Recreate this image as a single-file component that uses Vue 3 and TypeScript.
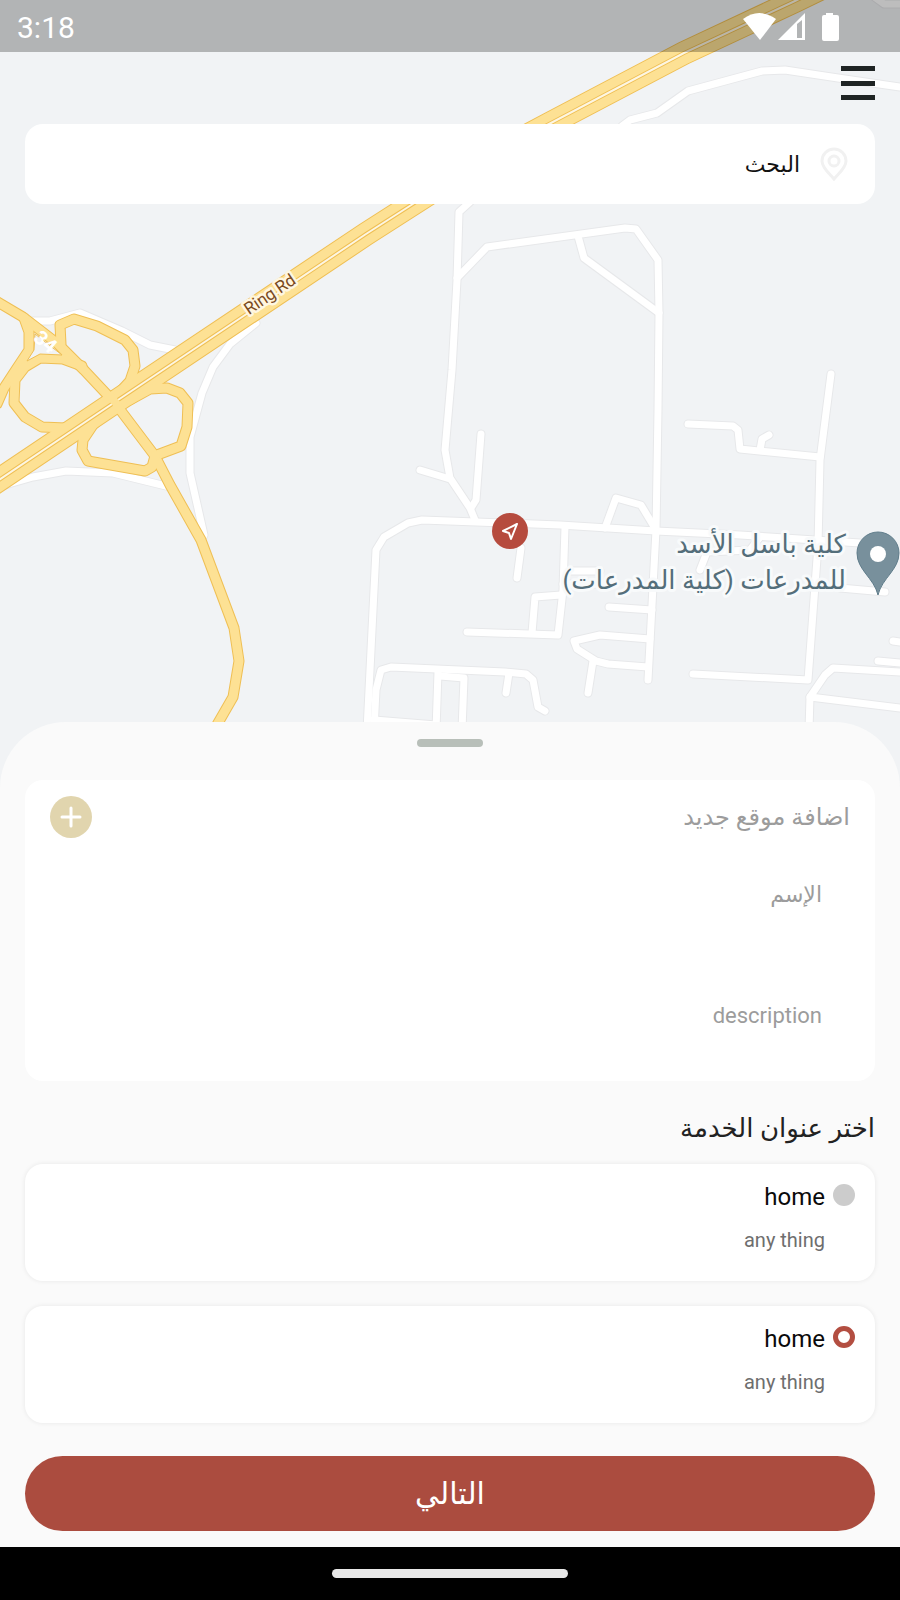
<script setup lang="ts">
import { ref } from 'vue'

interface Address {
  id: number
  title: string
  details: string
}

const addresses: Address[] = [
  { id: 1, title: 'home', details: 'any thing' },
  { id: 2, title: 'home', details: 'any thing' },
]
const selected = ref(2)
const search = ref('')
const placeName = ref('')
const placeDescription = ref('')

const localStreets: string[] = [
  'M622 126 L630 120 L657 113 L688 91 L762 71 L785 70 L838 78 L900 87',
  'M873 -4 L884 4 L900 4',
  'M470 202 L459 212 L457 280 L452 370 L445 450 L450 478 L470 508 L475 520',
  'M457 278 L487 247 L625 228 L636 229 L658 260 L659 313 L658 410 L656 530 L652 605 L648 680',
  'M578 236 L584 258 L659 313',
  'M420 470 L450 479',
  'M481 434 L476 500 L471 508',
  'M367 730 L376 550 L384 537 L408 523 L422 520 L560 525 L656 531 L740 535 L860 543',
  'M521 548 L517 578',
  'M565 527 L563 590 L558 635 L467 632',
  'M561 595 L535 597 L532 633',
  'M564 571 L600 571',
  'M563 584 L600 584',
  'M605 528 L616 498 L641 505 L656 530',
  'M609 607 L652 610',
  'M650 639 L600 635 L574 641 L577 649 L596 661 L608 664 L648 667',
  'M593 661 L588 693',
  'M374 730 L376 690 L381 670 L391 667 L505 672 L526 674 L533 680 L538 707 L545 711',
  'M438 672 L436 730',
  'M440 676 L464 678 L462 730',
  'M509 673 L506 693',
  'M374 720 L436 725',
  'M688 424 L733 426 L738 430 L740 449 L820 457',
  'M760 450 L762 439 L769 435',
  'M831 374 L820 460 L818 545 L808 680 L693 674',
  'M700 570 L707 552 L750 550 L760 537',
  'M840 588 L885 592',
  'M893 641 L900 642',
  'M878 661 L900 663',
  'M809 730 L810 697 L825 675 L833 668 L900 672',
  'M810 697 L900 708',
]

const slipRoads: string[] = [
  'M33 321 L50 321 L80 313 L122 331 L150 345 L175 350',
  'M5 485 L33 477 L66 471 L113 473 L170 487',
  'M256 323 L230 344 L213 367 L202 393 L190 437 L190 473 L204 535',
]

const ramps: string[] = [
  'M-4 301 L23 317 L58 344 L84 370 L115 403 L155 456 L170 485 L201 540 L234 628 L239 661 L233 697 L214 730',
  'M24 318 L29 332 L29 350 L17 368 L4 388 L-3 404',
  'M82 366 L63 359 L40 358 L25 367 L15 380 L14 403 L25 417 L42 427 L66 428 L100 410',
  'M61 344 L60 325 L74 319 L97 326 L125 340 L133 350 L135 366 L130 381 L118 394',
  'M130 400 L150 389 L167 388 L180 393 L188 403 L187 427 L181 446 L157 455',
  'M155 456 L152 467 L145 471 L88 461 L82 450 L83 440 L93 425 L112 408',
]

const highway = 'M830 -16 L795 1 L684 53 L549 124 L480 161 L366 234 L115 402 L-10 486'
</script>

<template>
  <div class="screen" dir="rtl">
    <section class="map-area">
      <svg class="map" viewBox="0 0 900 790" preserveAspectRatio="xMidYMin slice" aria-label="Map">
        <g class="line">
          <path v-for="d in localStreets" :key="d" :d="d" stroke="#e7e8ea" stroke-width="9" />
          <path v-for="d in slipRoads" :key="d" :d="d" stroke="#e7e8ea" stroke-width="9" />
          <path v-for="d in localStreets" :key="'f' + d" :d="d" stroke="#fff" stroke-width="7" />
          <path v-for="d in slipRoads" :key="'f' + d" :d="d" stroke="#fff" stroke-width="7" />
        </g>
        <g class="line">
          <path v-for="d in ramps" :key="d" :d="d" stroke="#efbf54" stroke-width="11" />
          <path :d="highway" stroke="#efbf54" stroke-width="24" />
          <path :d="highway" stroke="#fde194" stroke-width="22" />
          <path v-for="d in ramps" :key="'f' + d" :d="d" stroke="#fde194" stroke-width="9" />
          <path :d="highway" stroke="#efbf54" stroke-width="4" />
          <path :d="highway" stroke="#fdf6e2" stroke-width="2" />
          <path d="M111 397 L119 407" stroke="#fde194" stroke-width="8" />
        </g>
        <path d="M35 334 L34 350 L27 361 L40 354 L62 355 Z" fill="#f1f3f5" stroke="#efbf54" />
        <text class="route" direction="ltr" text-anchor="middle" transform="translate(41 347) rotate(40)">34</text>
        <text class="road" direction="ltr" text-anchor="middle" transform="translate(273 299) rotate(-34)">Ring Rd</text>
        <g class="poi">
          <text x="846" y="553" direction="rtl">كلية باسل الأسد</text>
          <text x="846" y="589" direction="rtl">للمدرعات (كلية المدرعات)</text>
        </g>
        <path d="M878 595 C874 578 857 570 857 553 A21 21 0 0 1 899 553 C899 570 882 578 878 595 Z" fill="#78909c" stroke="#607d8b" />
        <circle cx="878" cy="554" r="8" fill="#fff" />
        <circle cx="510" cy="531" r="18" fill="#b64b3e" />
        <path d="M517 524 L503 531 L509 533 L511 539 Z" fill="none" stroke="#fff" stroke-width="2" stroke-linejoin="round" />
      </svg>

      <div class="status" dir="ltr">
        <span>3:18</span>
        <svg width="96" height="28" viewBox="0 0 96 28" fill="#fff" aria-hidden="true">
          <path d="M0 6 Q16 -6 33 6 L17 27 Z" />
          <path fill-rule="evenodd" d="M35 27 L62 0 V27 Z M54 11 V25 H59 V7 Z" />
          <path d="M83 0 h7 v2 h4 q2 0 2 2 v22 q0 2 -2 2 h-13 q-2 0 -2 -2 v-22 q0 -2 2 -2 h2 Z" />
        </svg>
      </div>

      <header class="tools">
        <button class="menu" type="button" aria-label="القائمة"><i></i><i></i><i></i></button>
        <label class="search">
          <svg width="28" height="34" viewBox="0 0 28 34" fill="none" stroke="#f1f1f1" stroke-width="3" aria-hidden="true">
            <path d="M14 32 C10 27 2 21 2 14 A12 12 0 0 1 26 14 C26 21 18 27 14 32 Z" />
            <circle cx="14" cy="14" r="5" />
          </svg>
          <input v-model="search" type="text" placeholder="البحث" aria-label="البحث" />
        </label>
      </header>
    </section>

    <main class="sheet">
      <div class="handle"></div>

      <form class="new-place" @submit.prevent>
        <div class="new-head">
          <h2>اضافة موقع جديد</h2>
          <button class="add" type="submit" aria-label="اضافة">
            <svg width="22" height="22" viewBox="0 0 22 22" stroke="#fff" stroke-width="3" stroke-linecap="round" aria-hidden="true">
              <path d="M11 2 V20 M2 11 H20" />
            </svg>
          </button>
        </div>
        <input v-model="placeName" type="text" placeholder="الإسم" aria-label="الإسم" />
        <input v-model="placeDescription" type="text" placeholder="description" aria-label="description" />
      </form>

      <h1>اختر عنوان الخدمة</h1>

      <div class="addresses" role="radiogroup" aria-label="اختر عنوان الخدمة">
        <label v-for="a in addresses" :key="a.id" class="address">
          <input v-model="selected" type="radio" name="address" :value="a.id" />
          <span class="info">
            <span class="title">{{ a.title }}</span>
            <span class="details">{{ a.details }}</span>
          </span>
        </label>
      </div>

      <button class="next" type="button">التالي</button>
    </main>

    <footer class="nav"><span></span></footer>
  </div>
</template>

<style>
body {
  margin: 0;
}
</style>

<style scoped>
* {
  box-sizing: border-box;
}
.screen {
  display: flex;
  flex-direction: column;
  min-height: 100vh;
  background: #fafafa;
  font-family: Roboto, "DejaVu Sans", sans-serif;
  overflow: hidden;
}
button,
input {
  font: inherit;
  border: 0;
  padding: 0;
  margin: 0;
}
.map-area {
  position: relative;
  flex: 1;
  min-height: 480px;
}
.map {
  position: absolute;
  top: 0;
  left: 0;
  width: 100%;
  height: calc(100% + 68px);
  background: #f1f3f5;
}
.line path {
  fill: none;
  stroke-linecap: round;
  stroke-linejoin: round;
}
.road,
.poi {
  paint-order: stroke;
  stroke-linejoin: round;
}
.road {
  font-size: 17px;
  fill: #7a4a20;
  stroke: #fff6e0;
  stroke-width: 5px;
}
.route {
  font-size: 20px;
  font-weight: 700;
  fill: #fff;
}
.poi {
  font-size: 26px;
  fill: #546e7a;
  stroke: #f8fafb;
  stroke-width: 6px;
}
.status {
  position: relative;
  display: flex;
  justify-content: space-between;
  align-items: center;
  height: 52px;
  padding: 2px 61px 0 17px;
  background: rgba(0, 0, 0, 0.26);
  color: #fff;
  font-size: 30px;
}
.tools {
  position: relative;
  display: flex;
  flex-direction: column;
  align-items: flex-start;
  gap: 24px;
  padding: 14px 25px 0;
}
.menu {
  display: flex;
  flex-direction: column;
  justify-content: space-between;
  width: 34px;
  height: 34px;
  background: none;
}
.menu i {
  height: 5px;
  background: #1f2424;
}
.search {
  display: flex;
  align-items: center;
  gap: 20px;
  width: 100%;
  height: 80px;
  padding: 0 27px;
  border-radius: 18px;
  background: #fff;
}
.search input {
  flex: 1;
  min-width: 0;
  font-size: 22px;
  background: none;
}
.search input::placeholder {
  color: #111;
  opacity: 1;
}
.sheet {
  position: relative;
  display: flex;
  flex-direction: column;
  padding: 17px 25px 16px;
  border-radius: 66px 66px 0 0;
  background: #fafafa;
}
.handle {
  align-self: center;
  width: 66px;
  height: 8px;
  border-radius: 4px;
  background: #b8bfb9;
}
.new-place {
  display: flex;
  flex-direction: column;
  gap: 65px;
  margin-top: 33px;
  padding: 16px 25px 38px;
  border-radius: 18px;
  background: #fff;
}
.new-head {
  display: flex;
  justify-content: space-between;
  align-items: center;
  margin-bottom: -37px;
}
.new-head h2 {
  margin: 0;
  font-size: 24px;
  line-height: 42px;
  font-weight: 400;
  color: #9c9c9c;
}
.add {
  display: grid;
  place-items: center;
  width: 42px;
  height: 42px;
  border-radius: 50%;
  background: #e1d5ae;
}
.new-place input {
  height: 56px;
  padding: 0 28px;
  font-size: 22px;
  background: none;
}
.new-place input::placeholder {
  color: #9c9c9c;
  opacity: 1;
}
h1 {
  margin: 28px 0 16px;
  font-size: 26px;
  line-height: 39px;
  font-weight: 400;
  color: #222;
}
.addresses {
  display: flex;
  flex-direction: column;
  gap: 25px;
}
.address {
  display: flex;
  gap: 8px;
  min-height: 117px;
  padding: 16px 20px;
  border-radius: 18px;
  background: #fff;
  box-shadow: 0 0 5px rgba(0, 0, 0, 0.08);
}
.address input {
  appearance: none;
  width: 22px;
  height: 22px;
  margin-top: 4px;
  border-radius: 50%;
  background: #ccc;
}
.address input:checked {
  border: 5px solid #b34e41;
  background: #fff;
}
.info {
  display: flex;
  flex-direction: column;
  gap: 12px;
}
.title {
  font-size: 24px;
  line-height: 34px;
  color: #0a0a0a;
}
.details {
  font-size: 20px;
  line-height: 28px;
  color: #6e6e6e;
}
.next {
  height: 75px;
  margin-top: 33px;
  border-radius: 38px;
  background: #ab4c3f;
  color: #fff;
  font-size: 30px;
}
.nav {
  display: flex;
  justify-content: center;
  align-items: center;
  height: 53px;
  background: #000;
}
.nav span {
  width: 236px;
  height: 9px;
  border-radius: 5px;
  background: #e8e8e8;
}
</style>
